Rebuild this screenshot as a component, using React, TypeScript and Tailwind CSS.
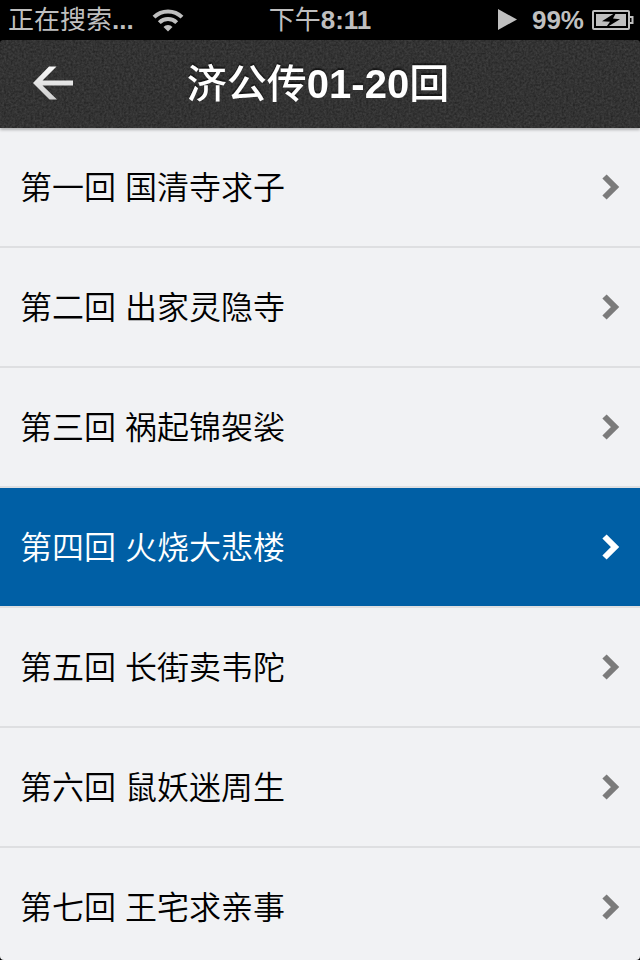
const chapters = [
  '第一回 国清寺求子',
  '第二回 出家灵隐寺',
  '第三回 祸起锦袈裟',
  '第四回 火烧大悲楼',
  '第五回 长街卖韦陀',
  '第六回 鼠妖迷周生',
  '第七回 王宅求亲事',
];

const currentChapter = 3;

function WifiIcon() {
  return (
    <svg width="32" height="24" viewBox="0 0 32 24" fill="none" stroke="#bfbfbf" aria-hidden="true">
      <path d="M2 9.200a19.800 19.800 0 0 1 28 0" strokeWidth="4" />
      <path d="M7.300 14.600a12.300 12.300 0 0 1 17.400 0" strokeWidth="4" />
      <path d="M16 23.500l-4.500-4.500a6 6 0 0 1 9 0z" fill="#bfbfbf" stroke="none" />
    </svg>
  );
}

function BatteryIcon() {
  return (
    <svg width="42" height="20" viewBox="0 0 42 20" aria-hidden="true">
      <rect x="1" y="1" width="36" height="18" rx="1" fill="none" stroke="#bfbfbf" strokeWidth="2" />
      <rect x="4" y="4" width="30" height="12" fill="#bfbfbf" />
      <path d="M38 7h2.500v6H38" fill="none" stroke="#bfbfbf" strokeWidth="2" />
      <path d="M24.500 2L10 11.200l8 .6L13.500 18 28 9.200l-7-.8z" fill="#000" />
    </svg>
  );
}

function StatusBar() {
  return (
    <div className="grid h-10 shrink-0 grid-cols-[1fr_auto_1fr] items-center bg-black text-[26px] leading-10 text-[#bfbfbf]">
      <div className="flex items-center gap-4.5 pl-2">
        <span>
          正在搜索<span className="font-bold">...</span>
        </span>
        <WifiIcon />
      </div>
      <span>
        下午<span className="font-bold">8:11</span>
      </span>
      <div className="flex items-center justify-end pr-1.5">
        <svg className="mr-3.5" width="20" height="22" viewBox="0 0 20 22" aria-hidden="true">
          <path d="M0 0l19 10.500L0 21z" fill="#bfbfbf" />
        </svg>
        <span className="mr-2 font-bold">99%</span>
        <BatteryIcon />
      </div>
    </div>
  );
}

function Header() {
  return (
    <header className="relative z-10 grid h-22 shrink-0 grid-cols-[80px_1fr_84px] items-center rounded-t bg-[#303030] shadow-[0_2px_3px_#0004]">
      <svg className="absolute inset-0 h-full w-full rounded-t" aria-hidden="true">
        <filter id="grain" x="0" y="0" width="100%" height="100%" colorInterpolationFilters="sRGB">
          <feTurbulence type="fractalNoise" baseFrequency="0.45" numOctaves="2" seed="4" />
          <feColorMatrix values="0.16 0 0 0 0.12  0.16 0 0 0 0.12  0.16 0 0 0 0.12  0 0 0 0 1" />
        </filter>
        <rect width="100%" height="100%" filter="url(#grain)" />
      </svg>
      <button type="button" aria-label="返回" className="relative flex h-full items-center pl-8">
        <svg width="42" height="36" viewBox="0 0 42 36" aria-hidden="true">
          <linearGradient id="arrow" x1="0" y1="0" x2="0" y2="1">
            <stop offset="0" stopColor="#fafafa" />
            <stop offset="1" stopColor="#cfcfcf" />
          </linearGradient>
          <path d="M1 17L17 0.500h7.500L10.500 14.500H41v5H10.500L25 33.500h-7.500z" fill="url(#arrow)" />
        </svg>
      </button>
      <h1 className="relative text-center text-[40px] leading-[88px] font-medium text-white [text-shadow:0_-2px_1px_#0008]">
        济公传<span className="font-bold">01-20</span>回
      </h1>
    </header>
  );
}

function ChapterRow({ title, active }: { title: string; active: boolean }) {
  return (
    <li className="border-b-2 border-[#dedfe1]">
      <a
        href="#"
        aria-current={active ? 'true' : undefined}
        className={
          active
            ? 'flex h-[118px] items-center justify-between bg-[#005fa5] px-5 font-[350] text-white'
            : 'flex h-[118px] items-center justify-between px-5 font-[350] text-black'
        }
      >
        <span className="pt-0.5 text-[32px] leading-10">{title}</span>
        <svg
          className={active ? 'text-white' : 'text-[#7b7b7b]'}
          width="18"
          height="26"
          viewBox="0 0 18 26"
          fill="none"
          stroke="currentColor"
          strokeWidth="6"
          aria-hidden="true"
        >
          <path d="M2.500 2.500L13 13 2.500 23.500" />
        </svg>
      </a>
    </li>
  );
}

export default function App() {
  return (
    <div
      lang="zh-CN"
      className="flex h-screen flex-col overflow-hidden bg-black font-['Liberation_Sans','Noto_Sans_CJK_SC',sans-serif]"
    >
      <StatusBar />
      <Header />
      <main className="min-h-0 flex-1 overflow-y-auto rounded-b bg-[#f1f2f4] [scrollbar-width:none]">
        <ul>
          {chapters.map((title, i) => (
            <ChapterRow key={title} title={title} active={i === currentChapter} />
          ))}
        </ul>
      </main>
    </div>
  );
}
